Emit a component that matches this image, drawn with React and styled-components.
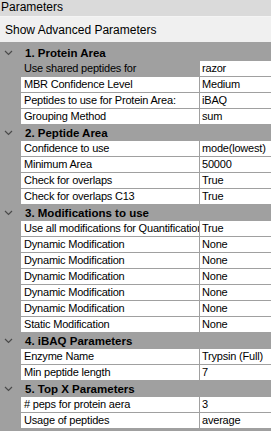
import React from 'react';
import styled, { createGlobalStyle } from 'styled-components';

const GlobalStyle = createGlobalStyle`
  html, body {
    margin: 0;
    padding: 0;
    background: #a0a0a0;
  }
  body {
    font-family: "Liberation Sans", Arial, sans-serif;
    color: #000;
  }
`;

const Panel = styled.div`
  width: 271px;
  height: 431px;
  overflow: hidden;
  display: flex;
  flex-direction: column;
`;

const TitleBar = styled.div`
  height: 16px;
  line-height: 15px;
  background: #dadada;
  border-bottom: 1px solid #f4f4f4;
  font-size: 12px;
  padding-left: 1px;
`;

const Toolbar = styled.div`
  height: 25px;
  background: #f0f0f0;
  display: flex;
  align-items: center;
  padding-left: 5px;
  font-size: 12px;
`;

const Grid = styled.div`
  flex: 1;
  background: #a0a0a0;
  padding-top: 3px;
  display: flex;
  flex-direction: column;
  gap: 1px;
`;

const SectionHeader = styled.div`
  height: 15px;
  display: grid;
  grid-template-columns: 25px 1fr;
  align-items: center;
  font-size: 11.5px;
  font-weight: bold;
`;

const Chevron = styled.svg`
  width: 9px;
  height: 6px;
  margin-left: 4px;
`;

const Row = styled.div`
  height: 15px;
  display: grid;
  grid-template-columns: 178px 1fr;
  column-gap: 1px;
  margin-left: 21px;
  font-size: 11px;
  letter-spacing: -0.2px;
  line-height: 15px;
`;

const Label = styled.div`
  background: ${(p) => (p.$selected ? '#a0a0a0' : '#fff')};
  padding-left: 3px;
  white-space: nowrap;
  overflow: hidden;
`;

const Value = styled.div`
  background: #fff;
  padding-left: 2px;
  white-space: nowrap;
  overflow: hidden;
`;

const sections = [
  {
    title: '1. Protein Area',
    rows: [
      ['Use shared peptides for', 'razor'],
      ['MBR Confidence Level', 'Medium'],
      ['Peptides to use for Protein Area:', 'iBAQ'],
      ['Grouping Method', 'sum'],
    ],
  },
  {
    title: '2. Peptide Area',
    rows: [
      ['Confidence to use', 'mode(lowest)'],
      ['Minimum Area', '50000'],
      ['Check for overlaps', 'True'],
      ['Check for overlaps C13', 'True'],
    ],
  },
  {
    title: '3. Modifications to use',
    rows: [
      ['Use all modifications for Quantification', 'True'],
      ['Dynamic Modification', 'None'],
      ['Dynamic Modification', 'None'],
      ['Dynamic Modification', 'None'],
      ['Dynamic Modification', 'None'],
      ['Dynamic Modification', 'None'],
      ['Static Modification', 'None'],
    ],
  },
  {
    title: '4. iBAQ Parameters',
    rows: [
      ['Enzyme Name', 'Trypsin (Full)'],
      ['Min peptide length', '7'],
    ],
  },
  {
    title: '5. Top X Parameters',
    rows: [
      ['# peps for protein aera', '3'],
      ['Usage of peptides', 'average'],
    ],
  },
];

const App = () => (
  <>
    <GlobalStyle />
    <Panel>
      <TitleBar>Parameters</TitleBar>
      <Toolbar>Show Advanced Parameters</Toolbar>
      <Grid>
        {sections.map((s, si) => (
          <React.Fragment key={s.title}>
            <SectionHeader>
              <Chevron viewBox="0 0 9 6">
                <polyline points="1,1 4.5,4.5 8,1" fill="none" stroke="#4a4a4a" strokeWidth="1.2" />
              </Chevron>
              <span>{s.title}</span>
            </SectionHeader>
            {s.rows.map(([label, value], ri) => (
              <Row key={ri}>
                <Label $selected={si === 0 && ri === 0}>{label}</Label>
                <Value>{value}</Value>
              </Row>
            ))}
          </React.Fragment>
        ))}
      </Grid>
    </Panel>
  </>
);

export default App;
